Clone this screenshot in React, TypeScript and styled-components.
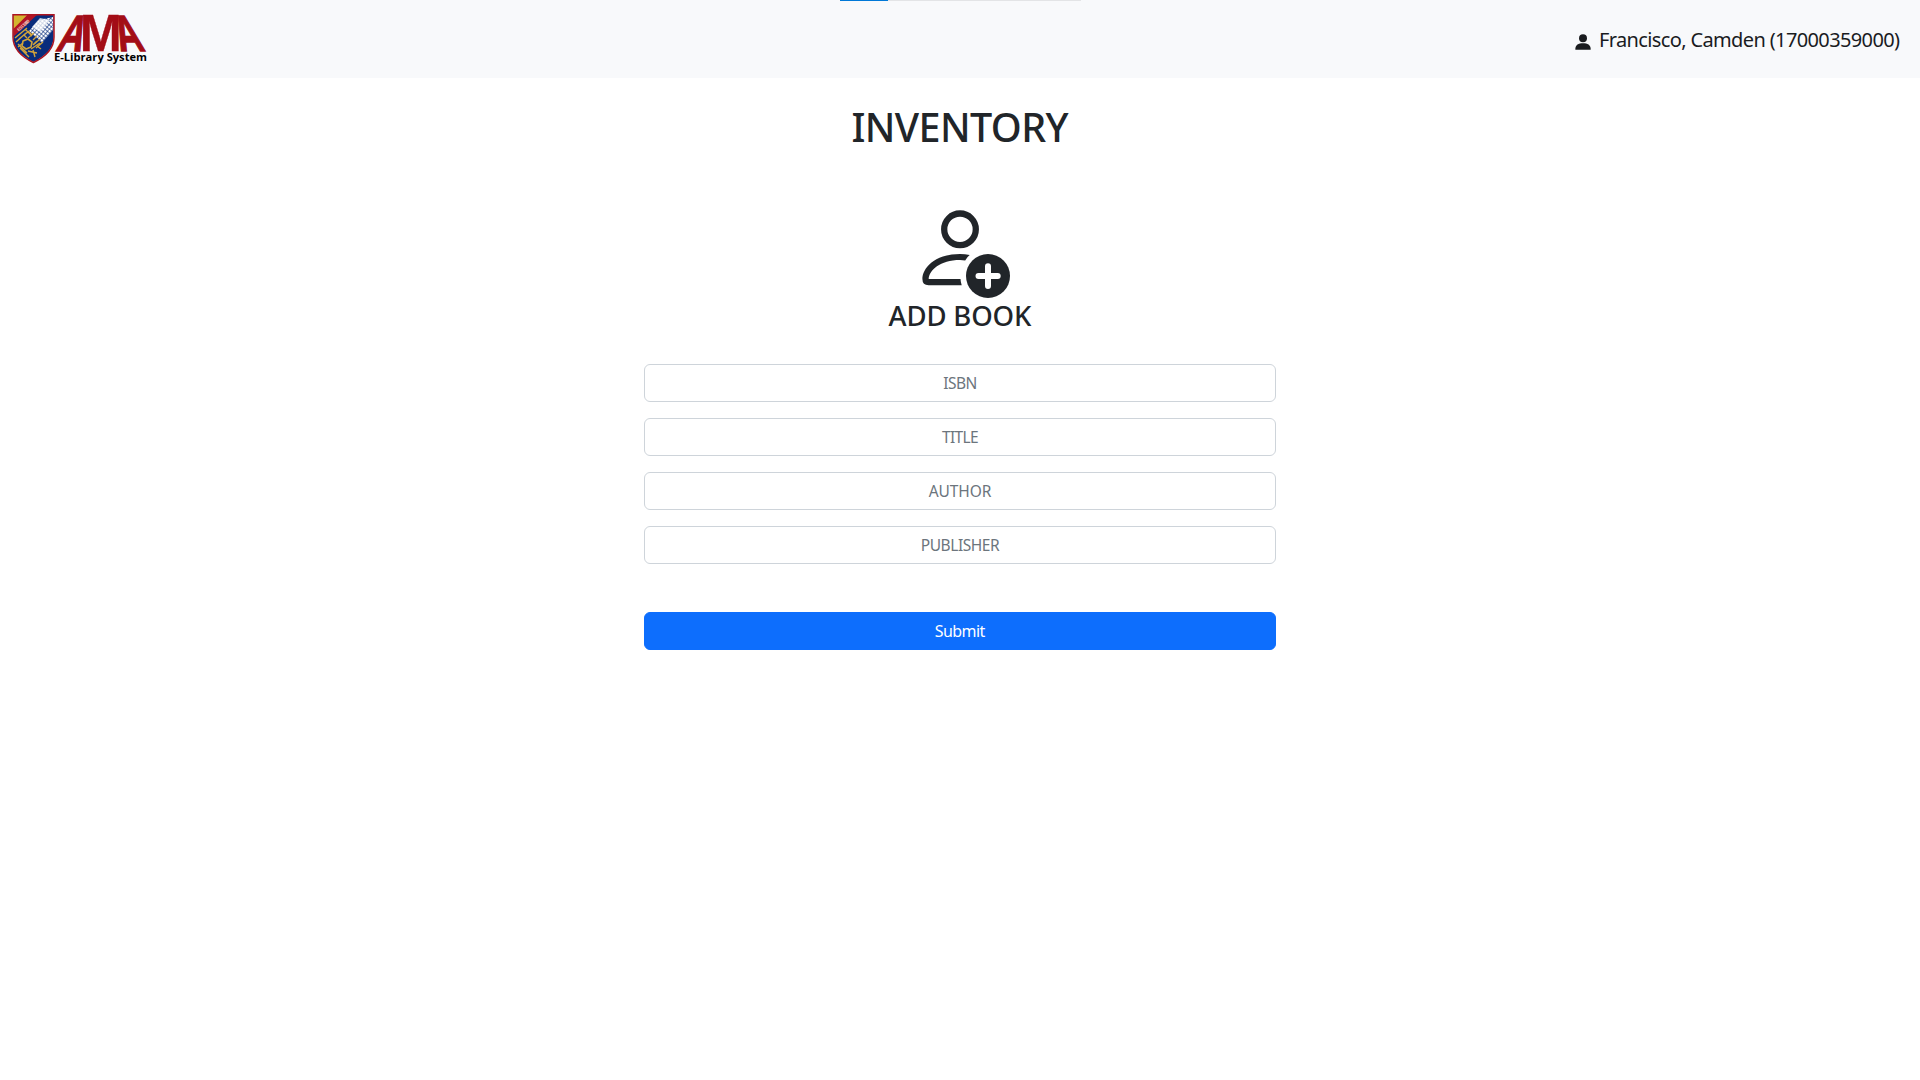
import React from "react";
import styled, { createGlobalStyle } from "styled-components";

const GlobalStyle = createGlobalStyle`
  *, *::before, *::after { box-sizing: border-box; }
  body {
    margin: 0;
    background: #fff;
    color: #212529;
    font-family: "Segoe UI", "Noto Sans", "Open Sans", sans-serif;
    font-size: 16px;
    line-height: 1.5;
  }
`;

const Page = styled.div`
  min-height: 100vh;
`;

const Navbar = styled.header`
  display: flex;
  align-items: center;
  justify-content: space-between;
  height: 78px;
  padding: 0 20px 0 10px;
  background: #f8f9fb;
`;

const LoadTrack = styled.div`
  position: absolute;
  top: 0;
  left: 840px;
  width: 241px;
  height: 1px;
  background: #e3e4e6;
`;

const LoadBar = styled.div`
  width: 48px;
  height: 1px;
  background: #0078d7;
`;

const Brand = styled.a`
  display: flex;
  svg { display: block; }
`;

const UserLink = styled.a`
  display: flex;
  align-items: center;
  gap: 8px;
  padding-top: 2px;
  color: #1a1c1f;
  font-size: 20px;
  line-height: 30px;
  svg { display: block; margin-top: 3px; }
`;

const Fit = styled.span<{ $spacing: number }>`
  letter-spacing: ${(p) => p.$spacing}px;
  margin-right: ${(p) => -p.$spacing}px;
  white-space: nowrap;
`;

const Main = styled.main`
  display: flex;
  flex-direction: column;
  align-items: center;
`;

const Heading = styled.h1`
  margin: 25px 0 0;
  font-size: 39.5px;
  font-weight: 540;
  line-height: 48px;
`;

const AddIcon = styled.svg`
  display: block;
  margin-top: 53px;
`;

const SubHeading = styled.h3`
  margin: -5px 0 0;
  font-size: 27.5px;
  font-weight: 540;
  line-height: 34px;
`;

const Form = styled.form`
  display: flex;
  flex-direction: column;
  gap: 16px;
  width: 632px;
  margin-top: 31px;
`;

const Field = styled.input<{ $spacing: number }>`
  width: 100%;
  height: 38px;
  padding: 6px 12px;
  border: 1px solid #ced4da;
  border-radius: 6px;
  background: #fff;
  color: #212529;
  font: inherit;
  font-size: 15.5px;
  text-align: center;
  &::placeholder {
    color: #6c757d;
    opacity: 1;
    letter-spacing: ${(p) => p.$spacing}px;
  }
`;

const Submit = styled.button`
  height: 38px;
  margin-top: 32px;
  padding: 6px 12px;
  border: 1px solid #0d6efd;
  border-radius: 6px;
  background: #0d6efd;
  color: #fff;
  font: inherit;
`;

const fields = [
  { name: "ISBN", spacing: -0.55 },
  { name: "TITLE", spacing: -0.6 },
  { name: "AUTHOR", spacing: -0.1 },
  { name: "PUBLISHER", spacing: -0.45 },
];

function Logo() {
  return (
    <svg width="140" height="78" viewBox="10 0 140 78" aria-label="AMA E-Library System">
      <defs>
        <clipPath id="shield">
          <path d="M13.4 15H53.6V37C53.6 48 46 56 33.4 62C21 56 13.4 48 13.4 37Z" />
        </clipPath>
        <pattern id="checks" width="3" height="3" patternUnits="userSpaceOnUse" patternTransform="rotate(40)">
          <rect width="2.4" height="2.4" fill="#fff" />
        </pattern>
      </defs>
      <g clipPath="url(#shield)">
        <rect x="12" y="14" width="44" height="50" fill="#082c7c" />
        <path d="M12 14H32L12 34Z" fill="#d3b52f" />
        <path d="M28 14H38L12 38V30Z" fill="#b31524" />
        <path d="M12 14H28L12 30Z" fill="#d3b52f" />
        <path d="M39 20L53 17V30L42 43L29 31Z" fill="url(#checks)" />
        <path d="M40 18L50 20L40 32L32 27Z" fill="#fff" opacity="0.75" />
        <g fill="none" stroke="#d1a33a" strokeWidth="1.4">
          <path d="M27 28L15 38M29 31L19 39M26 33L16 42M34 33L28 38M37 36L33 40M40 39L34 44M43 42L36 48M31 49L40 43M28 51L37 53M18 44L27 53M20 48L29 57M23 43L18 47M33 50L35 57M37 46L41 49M25 29L32 36" />
          <path d="M23 41L28 39L32 42L31 47L26 49L22 46Z" strokeWidth="1.6" />
          <path d="M29 32L32 35M24 35L27 38M37 41L33 45" />
        </g>
        <text x="0" y="0" transform="translate(18.8 31.6) rotate(-42)" fontFamily="Liberation Sans" fontWeight="700" fontSize="4.5" fill="#f3c9bf" textLength="15">EST. 1980</text>
      </g>
      <path d="M13 14.7H54V37C54 48 46 56.5 33.4 62.5C21 56.5 13 48 13 37Z" fill="none" stroke="#ac1420" strokeWidth="1.5" />
      <g fontFamily="Liberation Sans, Arial, sans-serif" fontWeight="700" fontSize="51" fill="#a30d16" stroke="#a30d16">
        <text transform="matrix(0.7 0 -0.34 1 55 50.5)" strokeWidth="1.4">A</text>
        <text transform="matrix(0.99 0 0 1 79.8 50.5)" strokeWidth="0.3">M</text>
        <text transform="matrix(0.7 0 0.34 1 120.6 50.5)" strokeWidth="1.4">A</text>
      </g>
      <text x="54" y="61" fontFamily="Segoe UI, Open Sans, sans-serif" fontWeight="700" fontSize="11" fill="#000" textLength="93" lengthAdjust="spacingAndGlyphs">E-Library System</text>
    </svg>
  );
}

function PersonIcon() {
  return (
    <svg width="16" height="16" viewBox="0 0 16 16" fill="#1a1c1f">
      <circle cx="8" cy="4.2" r="4" />
      <path d="M.3 15.2C.3 10.8 3.4 9.2 8 9.2S15.7 10.8 15.7 15.2Q15.7 15.7 15.2 15.7H.8Q.3 15.7 .3 15.2Z" />
    </svg>
  );
}

function PersonAddIcon() {
  return (
    <AddIcon width="100" height="100" viewBox="910 204 100 100">
      <circle cx="960" cy="229.3" r="15.8" fill="none" stroke="#212529" strokeWidth="6.3" />
      <path
        fill="#212529"
        fillRule="evenodd"
        d="M960 254Q965 254 969.7 255.1Q967 257.2 965.2 260.4L960 260.1C940 260.1 929 270.5 928.7 279.1H960.5Q960.7 282.2 961.7 285.3H928.6Q922.4 285.3 922.4 279.1C922.4 269 933.5 254 960 254Z"
      />
      <circle cx="988" cy="276" r="22" fill="#212529" />
      <path d="M988 266.3V286M978.5 276H997.7" stroke="#fff" strokeWidth="6" strokeLinecap="round" />
    </AddIcon>
  );
}

export default function App() {
  return (
    <Page>
      <GlobalStyle />
      <Navbar>
        <Brand><Logo /></Brand>
        <UserLink>
          <PersonIcon />
          <Fit $spacing={-0.63}>Francisco, Camden (17000359000)</Fit>
        </UserLink>
      </Navbar>
      <LoadTrack><LoadBar /></LoadTrack>
      <Main>
        <Heading><Fit $spacing={-0.6}>INVENTORY</Fit></Heading>
        <PersonAddIcon />
        <SubHeading><Fit $spacing={-0.15}>ADD BOOK</Fit></SubHeading>
        <Form>
          {fields.map((f) => (
            <Field key={f.name} placeholder={f.name} $spacing={f.spacing} />
          ))}
          <Submit type="button"><Fit $spacing={-0.55}>Submit</Fit></Submit>
        </Form>
      </Main>
    </Page>
  );
}
